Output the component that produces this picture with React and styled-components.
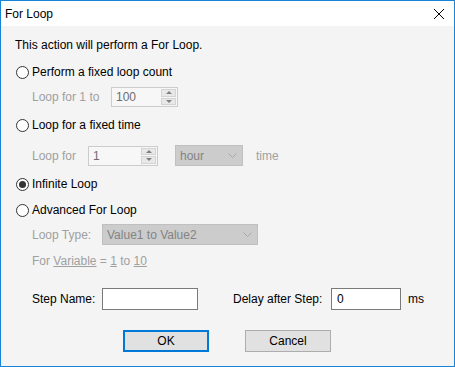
import React from "react";
import styled, { createGlobalStyle } from "styled-components";

const GlobalStyle = createGlobalStyle`
  html, body {
    margin: 0;
    padding: 0;
    background: #ffffff;
  }
  * {
    box-sizing: border-box;
  }
`;

const WindowStyled = styled.div`
  width: 455px;
  height: 367px;
  border: 1px solid #1883d7;
  display: flex;
  flex-direction: column;
  font-family: "Liberation Sans", Arial, sans-serif;
  font-size: 12px;
  color: #000;
`;

const TitleBar = styled.div`
  height: 25px;
  background: #ffffff;
  display: flex;
  align-items: center;
  justify-content: space-between;
  padding: 0 10px 0 4px;
  font-size: 12px;
`;

const CloseIcon = styled.svg`
  width: 10px;
  height: 10px;
  display: block;
`;

const Body = styled.div`
  flex: 1;
  background: #f4f4f4;
  padding: 0 13px 0 14px;
  display: flex;
  flex-direction: column;
`;

const Row = styled.div`
  display: flex;
  align-items: center;
  height: ${(p) => p.$h || 20}px;
  margin-top: ${(p) => p.$mt || 0}px;
  padding-left: ${(p) => p.$indent || 0}px;
  color: ${(p) => (p.$disabled ? "#a0a0a0" : "#000")};
`;

const RadioCircle = styled.span`
  width: 13px;
  height: 13px;
  border-radius: 50%;
  border: 1px solid #333333;
  background: #ffffff;
  display: flex;
  align-items: center;
  justify-content: center;
  margin-left: 1px;
  margin-right: 3px;
  &::after {
    content: "";
    width: 7px;
    height: 7px;
    border-radius: 50%;
    background: ${(p) => (p.$checked ? "#333333" : "transparent")};
  }
`;

const Label = styled.span`
  margin-left: ${(p) => p.$ml || 0}px;
  width: ${(p) => (p.$w ? `${p.$w}px` : "auto")};
  flex-shrink: 0;
  white-space: nowrap;
`;

const Underlined = styled.span`
  text-decoration: underline;
`;

const SpinBox = styled.div`
  display: flex;
  width: ${(p) => p.$w}px;
  height: 20px;
  border: 1px solid #cccccc;
  background: #f7f7f7;
  margin-left: ${(p) => p.$ml || 0}px;
`;

const SpinValue = styled.div`
  flex: 1;
  display: flex;
  align-items: center;
  padding-left: 4px;
  color: #6d6d6d;
`;

const SpinButtons = styled.div`
  width: 17px;
  display: flex;
  flex-direction: column;
  gap: 1px;
  padding: 1px;
`;

const SpinButton = styled.div`
  flex: 1;
  background: #e8e8e8;
  border: 1px solid #d4d4d4;
  display: flex;
  align-items: center;
  justify-content: center;
  &::after {
    content: "";
    border-left: 3px solid transparent;
    border-right: 3px solid transparent;
    ${(p) =>
      p.$down
        ? "border-top: 3px solid #808080;"
        : "border-bottom: 3px solid #808080;"}
  }
`;

const SelectBox = styled.div`
  width: ${(p) => p.$w}px;
  height: 21px;
  margin-left: ${(p) => p.$ml || 0}px;
  margin-right: ${(p) => p.$mr || 0}px;
  background: #cccccc;
  border: 1px solid #c0c0c0;
  display: flex;
  align-items: center;
  justify-content: space-between;
  padding: 0 5px 0 4px;
  color: #838383;
`;

const Chevron = styled.svg`
  width: 9px;
  height: 5px;
  display: block;
`;

const TextInput = styled.div`
  width: ${(p) => p.$w}px;
  height: 22px;
  margin-left: ${(p) => p.$ml || 0}px;
  background: #ffffff;
  border: 1px solid #7a7a7a;
  display: flex;
  align-items: center;
  padding-left: 5px;
`;

const ButtonRow = styled.div`
  display: flex;
  justify-content: flex-start;
  gap: 36px;
  margin-top: 20px;
  padding-left: 108px;
`;

const Button = styled.button`
  width: 86px;
  height: 22px;
  background: #e1e1e1;
  border: ${(p) => (p.$primary ? "2px solid #0078d7" : "1px solid #adadad")};
  font-family: inherit;
  font-size: 12px;
  color: #000;
  padding: 0;
`;

const Radio = ({ checked, children, mt }) => (
  <Row $mt={mt}>
    <RadioCircle $checked={checked} />
    <Label>{children}</Label>
  </Row>
);

const Spin = ({ value, w, ml }) => (
  <SpinBox $w={w} $ml={ml}>
    <SpinValue>{value}</SpinValue>
    <SpinButtons>
      <SpinButton />
      <SpinButton $down />
    </SpinButtons>
  </SpinBox>
);

const Select = ({ value, w, ml, mr }) => (
  <SelectBox $w={w} $ml={ml} $mr={mr}>
    <span>{value}</span>
    <Chevron viewBox="0 0 9 5">
      <path d="M0.5 0.5 L4.5 4.5 L8.5 0.5" fill="none" stroke="#a8a8a8" strokeWidth="1" />
    </Chevron>
  </SelectBox>
);

const App = () => {
  return (
    <>
      <GlobalStyle />
      <WindowStyled>
        <TitleBar>
          <span>For Loop</span>
          <CloseIcon viewBox="0 0 10 10">
            <path d="M0 0 L10 10 M10 0 L0 10" stroke="#000" strokeWidth="1" />
          </CloseIcon>
        </TitleBar>
        <Body>
          <Row $h={16} $mt={11}>
            This action will perform a For Loop.
          </Row>
          <Radio mt={9}>Perform a fixed loop count</Radio>
          <Row $h={20} $mt={5} $indent={17} $disabled>
            <Label $w={79}>Loop for 1 to</Label>
            <Spin value="100" w={67} />
          </Row>
          <Radio mt={8}>Loop for a fixed time</Radio>
          <Row $h={21} $mt={10} $indent={17} $disabled>
            <Label $w={56}>Loop for</Label>
            <Spin value="1" w={70} />
            <Select value="hour" w={68} ml={17} mr={13} />
            <Label>time</Label>
          </Row>
          <Radio checked mt={8}>Infinite Loop</Radio>
          <Radio mt={6}>Advanced For Loop</Radio>
          <Row $h={21} $mt={4} $indent={17} $disabled>
            <Label $w={70}>Loop Type:</Label>
            <Select value="Value1 to Value2" w={156} />
          </Row>
          <Row $h={20} $mt={6} $indent={17} $disabled>
            For&nbsp;<Underlined>Variable</Underlined>&nbsp;=&nbsp;
            <Underlined>1</Underlined>&nbsp;to&nbsp;<Underlined>10</Underlined>
          </Row>
          <Row $h={22} $mt={17} $indent={17}>
            <Label $w={70}>Step Name:</Label>
            <TextInput $w={96} />
            <Label $w={98} $ml={35}>Delay after Step:</Label>
            <TextInput $w={70}>0</TextInput>
            <Label $ml={7}>ms</Label>
          </Row>
          <ButtonRow>
            <Button $primary>OK</Button>
            <Button>Cancel</Button>
          </ButtonRow>
        </Body>
      </WindowStyled>
    </>
  );
};

export default App;
